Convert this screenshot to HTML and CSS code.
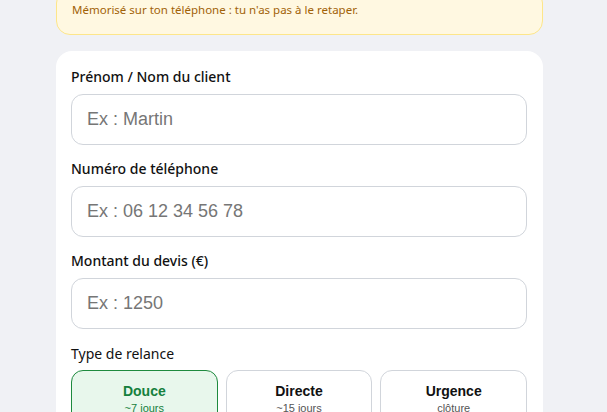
FILE: index.html
```html
<!DOCTYPE html>
<html lang="fr">
<head>
    <meta charset="UTF-8">
    <meta name="viewport" content="width=device-width, initial-scale=1.0">
    <title>Relance devis</title>
    <link rel="stylesheet" href="styles.css">
</head>
<body>
    <main class="app">
        <div class="notice">
            <p>Mémorisé sur ton téléphone : tu n'as pas à le retaper.</p>
        </div>

        <form class="card">
            <div class="field">
                <label for="client">Prénom / Nom du client</label>
                <input id="client" type="text" placeholder="Ex : Martin">
            </div>
            <div class="field">
                <label for="phone">Numéro de téléphone</label>
                <input id="phone" type="tel" placeholder="Ex : 06 12 34 56 78">
            </div>
            <div class="field">
                <label for="amount">Montant du devis (€)</label>
                <input id="amount" type="text" placeholder="Ex : 1250">
            </div>
            <div class="field">
                <span class="label">Type de relance</span>
                <div class="types">
                    <button type="button" class="type active">
                        <strong>Douce</strong>
                        <small>~7 jours</small>
                    </button>
                    <button type="button" class="type">
                        <strong>Directe</strong>
                        <small>~15 jours</small>
                    </button>
                    <button type="button" class="type">
                        <strong>Urgence</strong>
                        <small>clôture</small>
                    </button>
                </div>
            </div>
        </form>
    </main>
</body>
</html>
```

FILE: styles.css
```css
/* base */
* {
    margin: 0;
    padding: 0;
    box-sizing: border-box;
}
body {
    font-family: "Noto Sans", "Open Sans", sans-serif;
    background-color: #f0f1f5;
    color: #111;
    overflow: hidden;
}

.app {
    width: 487px;
    margin-left: 56px;
    margin-top: -11px;
}

/* bandeau info */
.notice {
    background-color: #fff8e1;
    border: 1px solid #fde68a;
    border-radius: 14px;
    padding: 11px 15px 15px;
    color: #a16207;
    font-size: 11.5px;
    line-height: 18px;
}

/* formulaire */
.card {
    margin-top: 16px;
    background-color: #fff;
    border-radius: 16px;
    padding: 16px 16px 20px 15px;
}
.field {
    margin-bottom: 14px;
}
.field label, .field .label {
    display: block;
    font-size: 14px;
    font-weight: 500;
    line-height: 20px;
    margin-bottom: 7px;
}
.field .label {
    font-weight: 400;
    padding-top: 1px;
    margin-bottom: 6px;
}
.field input {
    display: block;
    width: 100%;
    height: 51px;
    padding: 0 15px;
    border: 1px solid #d1d5db;
    border-radius: 12px;
    font-family: "Liberation Sans", Arial, sans-serif;
    font-size: 18px;
    color: #111;
    outline: none;
}
.field input::placeholder {
    color: #767676;
}

/* choix du type */
.types {
    display: grid;
    grid-template-columns: repeat(3, 1fr);
    gap: 8px;
}
.type {
    display: flex;
    flex-direction: column;
    align-items: center;
    padding: 11px 8px 10px;
    background-color: #fff;
    border: 1px solid #d1d5db;
    border-radius: 12px;
    font-family: "Liberation Sans", Arial, sans-serif;
    color: #111;
    cursor: pointer;
}
.type strong {
    font-size: 14px;
    line-height: 18px;
}
.type small {
    font-size: 11px;
    line-height: 16px;
    color: #555;
}
.type.active {
    background-color: #e8f7ec;
    border-color: #1e8a3e;
    color: #15803d;
}
.type.active small {
    color: #15803d;
}
```
